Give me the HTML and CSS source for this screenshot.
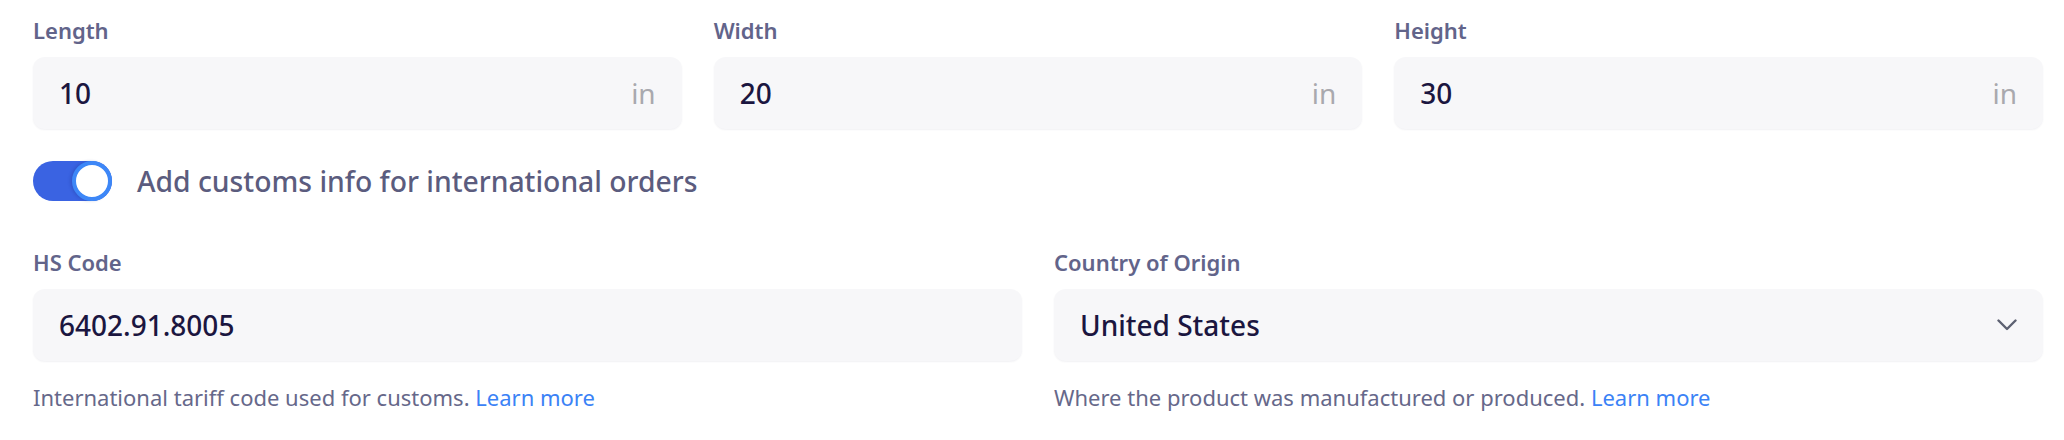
FILE: index.html
```html
<!DOCTYPE html>
<html lang="en">
<head>
<meta charset="utf-8">
<title>Package details</title>
<link rel="stylesheet" href="styles.css">
</head>
<body>
<div class="form">
  <div class="row three">
    <div class="field">
      <div class="label">Length</div>
      <div class="box"><span class="value">10</span><span class="unit">in</span></div>
    </div>
    <div class="field">
      <div class="label">Width</div>
      <div class="box"><span class="value">20</span><span class="unit">in</span></div>
    </div>
    <div class="field">
      <div class="label">Height</div>
      <div class="box"><span class="value">30</span><span class="unit">in</span></div>
    </div>
  </div>

  <div class="toggle-row">
    <span class="toggle"></span>
    <span class="toggle-text">Add customs info for international orders</span>
  </div>

  <div class="row two">
    <div class="field">
      <div class="label">HS Code</div>
      <div class="box"><span class="value">6402.91.8005</span></div>
      <div class="help">International tariff code used for customs. <a class="link" href="#">Learn more</a></div>
    </div>
    <div class="field">
      <div class="label">Country of Origin</div>
      <div class="box"><span class="value">United States</span>
        <svg class="chev" width="20" height="12" viewBox="0 0 20 12"><path d="M1.5 1.5 L10 10 L18.5 1.5" fill="none" stroke="#5d6172" stroke-width="2.4" stroke-linecap="round" stroke-linejoin="round"/></svg>
      </div>
      <div class="help">Where the product was manufactured or produced. <a class="link" href="#">Learn more</a></div>
    </div>
  </div>
</div>
</body>
</html>
```

FILE: styles.css
```css
html, body {
  margin: 0;
  padding: 0;
  background: #ffffff;
}

body {
  font-family: "Noto Sans", "Open Sans", sans-serif;
}

.form {
  padding: 15px 21px 0 33px;
}

.row {
  display: grid;
  column-gap: 32px;
}

.row.three {
  grid-template-columns: 1fr 1fr 1fr;
}

.row.two {
  grid-template-columns: 1fr 1fr;
  margin-top: 46px;
}

.label {
  font-size: 22px;
  line-height: 30px;
  font-weight: 600;
  color: #62648a;
  margin-bottom: 12px;
}

.box {
  height: 72px;
  box-sizing: border-box;
  background: #f7f7f9;
  border-radius: 12px;
  box-shadow: 0 1px 2px rgba(20, 20, 60, 0.06);
  display: flex;
  align-items: center;
  justify-content: space-between;
  padding: 0 26px 0 26px;
}

.value {
  font-size: 28px;
  font-weight: 500;
  color: #1b1640;
}

.unit {
  font-size: 28px;
  color: #a9a9ae;
}

.chev {
  display: block;
}

.toggle-row {
  display: flex;
  align-items: center;
  gap: 25px;
  margin-top: 32px;
  height: 40px;
}

.toggle {
  position: relative;
  display: block;
  width: 79px;
  height: 40px;
  border-radius: 20px;
  background: #3a63e2;
}

.toggle::after {
  content: "";
  position: absolute;
  right: 0;
  top: 0;
  width: 40px;
  height: 40px;
  box-sizing: border-box;
  border-radius: 50%;
  border: 4px solid #3d87f7;
  background: #ffffff;
  box-shadow: -2px 0 3px rgba(20, 40, 120, 0.2);
}

.toggle-text {
  font-size: 28.3px;
  line-height: 40px;
  font-weight: 500;
  color: #5b5c7e;
}

.help {
  margin-top: 21px;
  font-size: 22px;
  line-height: 30px;
  color: #66688a;
}

.link {
  color: #3b82f6;
  text-decoration: none;
}
```
